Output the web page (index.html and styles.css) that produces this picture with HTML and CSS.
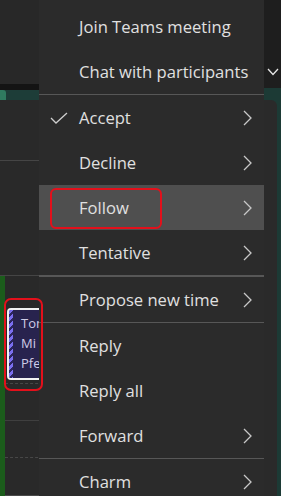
FILE: index.html
```html
<!DOCTYPE html>
<html lang="en">
<head>
<meta charset="utf-8">
<title>Meeting context menu</title>
<link rel="stylesheet" href="styles.css">
</head>
<body>
<div class="app">
  <div class="cal">
    <div class="cal-top"></div>
    <div class="cal-black"></div>
    <div class="cal-teal"><span class="cal-accent"></span></div>
    <div class="cal-row r1"></div>
    <div class="cal-row r2"></div>
    <div class="cal-day">
      <div class="slot s1">
        <div class="event">
          <span class="stripe"></span>
          <div class="ev-text"><div>Tom</div><div>Mi</div><div>Pfe</div></div>
        </div>
      </div>
      <div class="slot s2"></div>
      <div class="slot s3"></div>
      <div class="slot s4"></div>
    </div>
  </div>
  <div class="side">
    <div class="side-top">
      <svg class="chev-down" width="12" height="8" viewBox="0 0 12 8"><polyline points="1,1 6,6.5 11,1" fill="none" stroke="#e6e6e6" stroke-width="1.3"/></svg>
    </div>
    <div class="side-teal"></div>
    <div class="side-body"><div class="side-card"></div></div>
  </div>
</div>

<div class="menu">
  <div class="item"><span class="label">Join Teams meeting</span></div>
  <div class="item"><span class="label">Chat with participants</span></div>
  <div class="sep"></div>
  <div class="item">
    <svg class="check" width="18" height="12" viewBox="0 0 18 12"><polyline points="1,6 6,11 17,1" fill="none" stroke="#cfcfcf" stroke-width="1.3"/></svg>
    <span class="label">Accept</span>
    <svg class="chev" width="9" height="16" viewBox="0 0 9 16"><polyline points="1,1 8,8 1,15" fill="none" stroke="#c8c8c8" stroke-width="1.3"/></svg>
  </div>
  <div class="item">
    <span class="label">Decline</span>
    <svg class="chev" width="9" height="16" viewBox="0 0 9 16"><polyline points="1,1 8,8 1,15" fill="none" stroke="#c8c8c8" stroke-width="1.3"/></svg>
  </div>
  <div class="item active">
    <span class="label">Follow</span>
    <svg class="chev" width="9" height="16" viewBox="0 0 9 16"><polyline points="1,1 8,8 1,15" fill="none" stroke="#c8c8c8" stroke-width="1.3"/></svg>
    <span class="mark mark-follow"></span>
  </div>
  <div class="item">
    <span class="label">Tentative</span>
    <svg class="chev" width="9" height="16" viewBox="0 0 9 16"><polyline points="1,1 8,8 1,15" fill="none" stroke="#c8c8c8" stroke-width="1.3"/></svg>
  </div>
  <div class="sep thick"></div>
  <div class="item">
    <span class="label">Propose new time</span>
    <svg class="chev" width="9" height="16" viewBox="0 0 9 16"><polyline points="1,1 8,8 1,15" fill="none" stroke="#c8c8c8" stroke-width="1.3"/></svg>
  </div>
  <div class="sep"></div>
  <div class="item"><span class="label">Reply</span></div>
  <div class="item"><span class="label">Reply all</span></div>
  <div class="item">
    <span class="label">Forward</span>
    <svg class="chev" width="9" height="16" viewBox="0 0 9 16"><polyline points="1,1 8,8 1,15" fill="none" stroke="#c8c8c8" stroke-width="1.3"/></svg>
  </div>
  <div class="sep"></div>
  <div class="item">
    <span class="label">Charm</span>
    <svg class="chev" width="9" height="16" viewBox="0 0 9 16"><polyline points="1,1 8,8 1,15" fill="none" stroke="#c8c8c8" stroke-width="1.3"/></svg>
  </div>
</div>

<div class="mark mark-event"></div>
</body>
</html>
```

FILE: styles.css
```css
* { box-sizing: border-box; }
html, body { margin: 0; padding: 0; }
body {
  width: 281px;
  height: 496px;
  overflow: hidden;
  background: #292929;
  font-family: "Open Sans", "Noto Sans", sans-serif;
  position: relative;
}

.app {
  display: flex;
  height: 496px;
}

/* left calendar pane */
.cal {
  width: 264px;
  display: flex;
  flex-direction: column;
  background: #292929;
}
.cal-top { height: 84px; background: #282828; }
.cal-black { height: 6px; background: #141414; }
.cal-teal {
  height: 10px;
  background: #1d3d38;
  display: flex;
}
.cal-accent {
  width: 6px;
  background: #2f7b60;
  border-top-right-radius: 3px;
}
.cal-row { border-bottom: 1px solid #454545; }
.r1 { height: 61px; }
.r2 { height: 115px; }
.cal-day {
  flex: 1;
  border-left: 5px solid #1b5c1b;
  display: flex;
  flex-direction: column;
}
.slot { border-bottom: 1px solid #3f3f3f; }
.s1 {
  height: 108px;
  padding: 32px 0 0 2px;
  border-bottom: 1px dashed #474747;
}
.s2 { height: 37px; }
.s3 { height: 37px; border-bottom: 1px dashed #474747; }
.s4 { height: 38px; border-bottom-color: #4a4a4a; }

.event {
  width: 120px;
  height: 72px;
  border: 2px solid #f2f2f2;
  border-radius: 4px;
  background: #28234e;
  display: flex;
  overflow: hidden;
}
.stripe {
  width: 4px;
  flex: none;
  background: repeating-linear-gradient(135deg, #7a6ef0 0 3px, #2c2660 3px 5px);
}
.ev-text {
  padding: 3px 0 0 8px;
  font-size: 13px;
  line-height: 20px;
  color: #cfcce6;
}

/* right pane */
.side {
  width: 17px;
  display: flex;
  flex-direction: column;
}
.side-top {
  height: 88px;
  background: #1e1e1e;
  padding: 68px 0 0 3px;
}
.chev-down { display: block; }
.side-teal { height: 12px; background: #1c3a35; }
.side-body {
  flex: 1;
  background: #1c3a35;
  display: flex;
}
.side-card {
  width: 13px;
  background: #2a2a2a;
  border-top-right-radius: 6px;
}

/* context menu overlay */
.menu {
  position: absolute;
  left: 39px;
  top: 0;
  width: 225px;
  height: 520px;
  padding-top: 4px;
  background: #2b2b2b;
  color: #e0e0e0;
  font-size: 16.6px;
}
.item {
  height: 45px;
  display: flex;
  align-items: center;
  padding: 0 12px 0 40px;
  position: relative;
}
.item.active { background: #4f4f4f; }
.label { flex: 1; white-space: nowrap; }
.check {
  position: absolute;
  left: 11px;
  top: 17px;
}
.chev { display: block; flex: none; }
.sep { height: 1px; background: #575757; }
.sep.thick { height: 2px; }

/* red annotation outlines */
.mark {
  position: absolute;
  border: 2px solid #e3101b;
  border-radius: 6px;
}
.mark-follow {
  left: 11px;
  top: 3px;
  width: 112px;
  height: 41px;
}
.mark-event {
  left: 4px;
  top: 298px;
  width: 39px;
  height: 93px;
  border-radius: 7px;
}
```
